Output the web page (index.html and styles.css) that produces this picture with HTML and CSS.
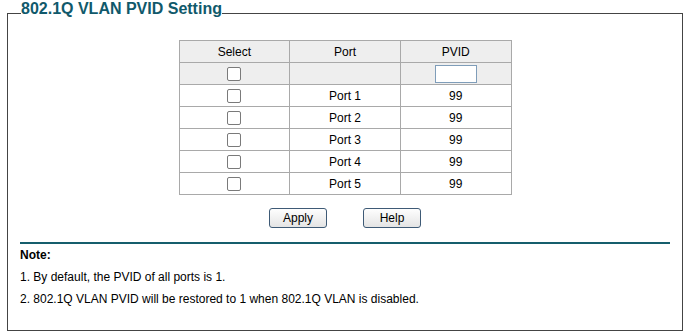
FILE: index.html
```html
<!DOCTYPE html>
<html>
<head>
<meta charset="utf-8">
<link rel="stylesheet" href="styles.css">
</head>
<body>
<fieldset class="panel">
  <legend class="panel-title">802.1Q VLAN PVID Setting</legend>
  <table class="grid">
    <tr class="head">
      <th>Select</th>
      <th>Port</th>
      <th>PVID</th>
    </tr>
    <tr class="batch">
      <td><span class="check"></span></td>
      <td></td>
      <td><span class="field"></span></td>
    </tr>
    <tr><td><span class="check"></span></td><td>Port 1</td><td>99</td></tr>
    <tr><td><span class="check"></span></td><td>Port 2</td><td>99</td></tr>
    <tr><td><span class="check"></span></td><td>Port 3</td><td>99</td></tr>
    <tr><td><span class="check"></span></td><td>Port 4</td><td>99</td></tr>
    <tr><td><span class="check"></span></td><td>Port 5</td><td>99</td></tr>
  </table>
  <div class="actions">
    <button class="btn">Apply</button>
    <button class="btn">Help</button>
  </div>
  <div class="note">
    <div class="note-title">Note:</div>
    <div class="note-line">1. By default, the PVID of all ports is 1.</div>
    <div class="note-line">2. 802.1Q VLAN PVID will be restored to 1 when 802.1Q VLAN is disabled.</div>
  </div>
</fieldset>
</body>
</html>
```

FILE: styles.css
```css
html, body {
  margin: 0;
  padding: 0;
  background: #ffffff;
}
body {
  font-family: "Liberation Sans", Arial, sans-serif;
  font-size: 12px;
  color: #000;
}
.panel {
  margin: 0 7px;
  padding: 0 12px 20px 12px;
  border: 1px solid #444444;
  height: auto;
}
.panel-title {
  font-size: 16px;
  font-weight: bold;
  line-height: 18px;
  color: #10596b;
  padding: 0 0 8px 0;
  margin-left: 1px;
}
.grid {
  margin: 14px auto 0 auto;
  border-collapse: collapse;
  width: 333px;
  table-layout: fixed;
}
.grid th, .grid td {
  border: 1px solid #a9a9a9;
  height: 21px;
  padding: 0;
  text-align: center;
  vertical-align: middle;
  font-weight: normal;
  font-size: 12px;
  line-height: 14px;
}
.grid tr.head, .grid tr.batch {
  background: #eeeeee;
}
.check {
  display: inline-block;
  width: 12px;
  height: 12px;
  border: 1px solid #7a7a7a;
  border-radius: 2px;
  background: #fff;
  vertical-align: middle;
}
.field {
  display: inline-block;
  width: 40px;
  height: 16px;
  border: 1px solid #7f9db9;
  background: #fff;
  vertical-align: middle;
}
.actions {
  display: flex;
  justify-content: center;
  gap: 36px;
  margin-top: 13px;
}
.btn {
  width: 58px;
  height: 20px;
  padding: 0;
  font-family: "Liberation Sans", Arial, sans-serif;
  font-size: 12px;
  color: #000;
  border: 1px solid #3e5a76;
  border-radius: 3px;
  background: linear-gradient(#fefefe, #e4e4e4);
}
.note {
  margin-top: 14px;
  border-top: 2px solid #155e6c;
}
.note-title {
  font-weight: bold;
  line-height: 22px;
}
.note-line {
  line-height: 22px;
}
```
